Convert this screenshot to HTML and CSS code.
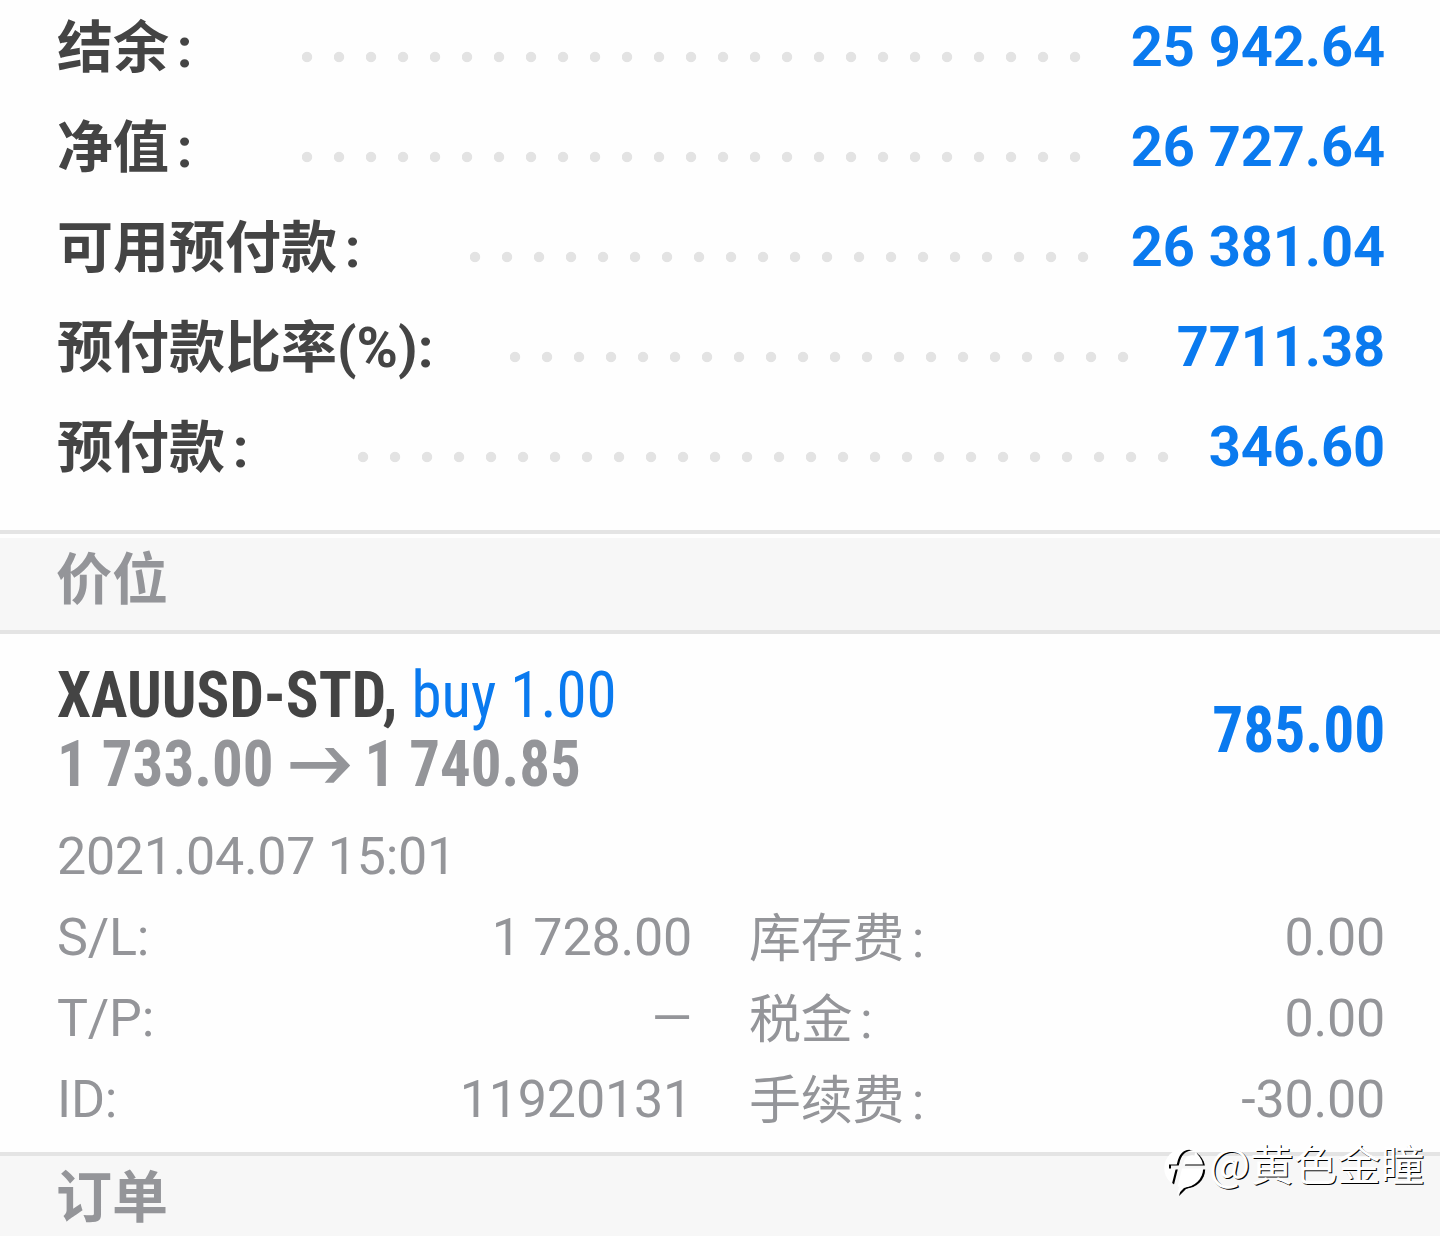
FILE: index.html
```html
<!DOCTYPE html>
<html lang="zh-CN">
  <head>
    <meta charset="UTF-8" />
    <meta name="viewport" content="width=device-width, initial-scale=1.0" />
    <title>交易</title>
    <link rel="stylesheet" href="styles.css">
  </head>
  <body>
    <section class="summary">
      <div class="summary-row">
        <span class="label">结余<span class="colon">:</span></span>
        <span class="dots"></span>
        <span class="value">25 942.64</span>
      </div>
      <div class="summary-row">
        <span class="label">净值<span class="colon">:</span></span>
        <span class="dots"></span>
        <span class="value">26 727.64</span>
      </div>
      <div class="summary-row">
        <span class="label">可用预付款<span class="colon">:</span></span>
        <span class="dots"></span>
        <span class="value">26 381.04</span>
      </div>
      <div class="summary-row">
        <span class="label">预付款比率(%):</span>
        <span class="dots"></span>
        <span class="value">7711.38</span>
      </div>
      <div class="summary-row">
        <span class="label">预付款<span class="colon">:</span></span>
        <span class="dots"></span>
        <span class="value">346.60</span>
      </div>
    </section>

    <h2 class="section-title positions">价位</h2>

    <section class="deal">
      <div class="deal-head">
        <div class="deal-info">
          <div class="deal-line">
            <span class="symbol">XAUUSD-STD,</span>
            <span class="side">buy 1.00</span>
          </div>
          <div class="deal-line prices">
            <span>1 733.00</span>
            <svg class="arrow" width="63" height="38" viewBox="0 0 54 34" preserveAspectRatio="none">
              <path d="M0 13.5H42L31 1H39L54 16.500L39 32H31L42 19.500H0Z" />
            </svg>
            <span>1 740.85</span>
          </div>
        </div>
        <div class="profit">785.00</div>
      </div>

      <div class="date">2021.04.07 15:01</div>
      <div class="details">
        <div class="detail"><span>S/L:</span><span>1 728.00</span></div>
        <div class="detail"><span class="fee">库存费<span class="colon">:</span></span><span>0.00</span></div>
        <div class="detail"><span>T/P:</span><span>—</span></div>
        <div class="detail"><span class="fee">税金<span class="colon">:</span></span><span>0.00</span></div>
        <div class="detail"><span>ID:</span><span>11920131</span></div>
        <div class="detail"><span class="fee">手续费<span class="colon">:</span></span><span>-30.00</span></div>
      </div>
    </section>

    <h2 class="section-title orders">订单</h2>

    <div class="watermark">
      <svg class="logo" width="47" height="56" viewBox="0 0 47 56">
        <mask id="f-cut">
          <rect width="47" height="56" fill="#fff" />
          <g fill="none" stroke="#000">
            <path d="M33 10.500C24 9 19.500 14 18 22L11.500 48" stroke-width="6" />
            <path d="M7 24.500H43" stroke-width="4" />
          </g>
        </mask>
        <g mask="url(#f-cut)" fill="#fff">
          <circle cx="21.700" cy="26" r="19.500" />
          <path d="M15 53L19 38L30 43L22 46Z" />
        </g>
      </svg>
      <span>@黄色金瞳</span>
    </div>
  </body>
</html>
```

FILE: styles.css
```css
* {
  margin: 0;
  padding: 0;
  box-sizing: border-box;
}

body {
  position: relative;
  height: 1236px;
  overflow: hidden;
  background: #fefefe;
  color: #444;
  font-family: Roboto, "Noto Sans CJK SC", sans-serif;
}

.summary {
  height: 530px;
  padding: 0 55px 0 57px;
}

.summary-row {
  display: flex;
  height: 100px;
  line-height: 95px;
  font-size: 56px;
  font-weight: 700;
  white-space: nowrap;
}

.label {
  line-height: 97px;
}

/* takes the width of one full-width character */
.colon {
  display: inline-block;
  width: 1em;
  padding-left: 0.14em;
}

.dots {
  flex: 1;
  margin: 51px 38px 0 77px;
  height: 12px;
  background: radial-gradient(circle at 5px 6px, #e3e3e3 4.8px, transparent 5.6px) 0 0 / 32px 12px repeat-x;
}

.value {
  color: #0a7aef;
  letter-spacing: -0.1px;
}

.section-title {
  padding-left: 56px;
  background: #f7f7f7;
  border-top: 4px solid #e4e4e4;
  color: #949599;
  font-size: 56px;
  font-weight: 700;
}

.positions {
  height: 104px;
  line-height: 92px;
  border-bottom: 4px solid #e4e4e4;
  box-shadow: inset 0 4px #fefefe;
}

.deal {
  height: 518px;
  padding: 27px 55px 0 57px;
  color: #949599;
}

.deal-head {
  display: flex;
  justify-content: space-between;
  font-size: 64px;
  font-stretch: 75%;
}

.deal-line {
  height: 69px;
  line-height: 70px;
  white-space: nowrap;
  transform: scaleX(0.952);
  transform-origin: left;
}

.symbol {
  color: #444;
  font-weight: 700;
}

.side,
.profit {
  color: #0a7aef;
}

.prices,
.profit {
  font-weight: 700;
}

.arrow {
  margin-left: 3px;
  fill: #949599;
  vertical-align: 1px;
}

.profit {
  line-height: 140px;
  transform: scaleX(0.96);
  transform-origin: right;
}

.date {
  height: 80px;
  margin-top: 16px;
  line-height: 80px;
  font-size: 52px;
  letter-spacing: -0.3px;
}

.details {
  display: grid;
  grid-template-columns: 635px 635px;
  column-gap: 58px;
}

.detail {
  display: flex;
  justify-content: space-between;
  height: 81px;
  line-height: 81px;
  font-size: 52px;
  letter-spacing: -0.2px;
}

.fee {
  margin-left: -1px;
  line-height: 85px;
}

.orders {
  height: 84px;
  line-height: 84px;
}

.watermark {
  position: absolute;
  left: 1162px;
  top: 1142px;
  display: flex;
  color: #fff;
  font-family: "Noto Sans CJK SC", sans-serif;
  font-size: 43.5px;
  line-height: 42px;
  text-shadow: 1.2px 1px 0 #000;
}

.logo {
  filter: drop-shadow(2px 1.5px 0 #000);
}
```
